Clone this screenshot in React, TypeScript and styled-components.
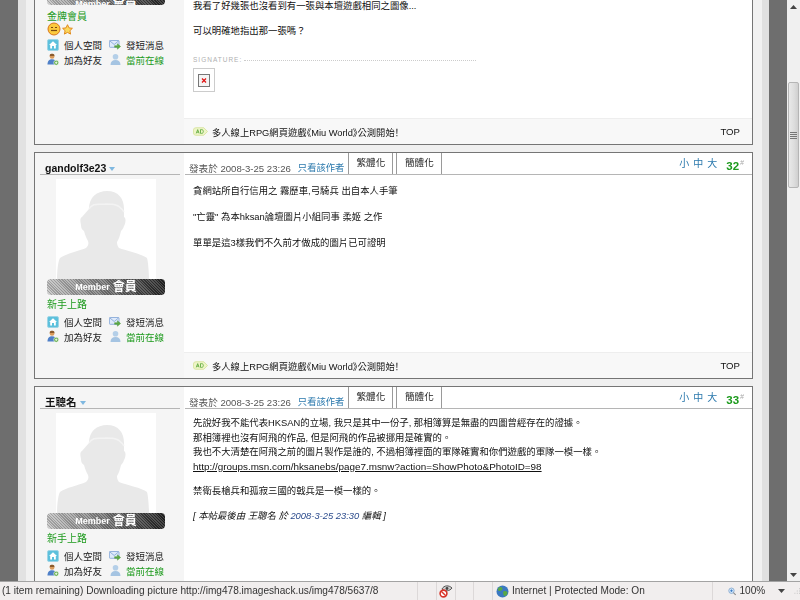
import React from "react";
import styled, { createGlobalStyle } from "styled-components";

const Global = createGlobalStyle`
  html, body { margin: 0; padding: 0; height: 100%; overflow: hidden; background: #f0f0f0; }
  #root { width: 800px; height: 600px; }
  * { box-sizing: border-box; }
`;

const FONT = `"Liberation Sans", "Noto Sans CJK TC", sans-serif`;

const Window = styled.div`
  width: 800px;
  height: 600px;
  display: flex;
  flex-direction: column;
  overflow: hidden;
  font-family: ${FONT};
  font-size: 10px;
  color: #222;
  filter: blur(0.25px);
`;
const Viewport = styled.div`
  flex: 1;
  min-height: 0;
  display: flex;
  overflow: hidden;
`;
const Gutter = styled.div<{ $w: number; $c: string }>`
  flex: 0 0 ${(p) => p.$w}px;
  width: ${(p) => p.$w}px;
  background: ${(p) => p.$c};
`;
const Forum = styled.div`
  flex: 0 0 719px;
  width: 719px;
  display: flex;
  flex-direction: column;
  gap: 7px;
`;
const PostBox = styled.article<{ $h: number; $top?: boolean }>`
  flex: 0 0 ${(p) => p.$h}px;
  height: ${(p) => p.$h}px;
  display: flex;
  border: 1px solid #757575;
  border-top: ${(p) => (p.$top ? "0" : "1px solid #757575")};
  background: #fff;
`;
const Side = styled.aside`
  flex: 0 0 149px;
  width: 149px;
  background: #f5f5f5;
  display: flex;
  flex-direction: column;
`;
const Main = styled.div`
  flex: 1;
  min-width: 0;
  display: flex;
  flex-direction: column;
  background: #fff;
`;
const AuthorHead = styled.div`
  height: 22px;
  margin: 0 4px 0 5px;
  padding: 9px 0 0 5px;
  border-bottom: 1px solid #b5b5b5;
  font-size: 10.5px;
  line-height: 12px;
  font-weight: bold;
  color: #111;
  display: flex;
  align-items: center;
  gap: 3px;
`;
const Caret = styled.span`
  width: 0;
  height: 0;
  margin-top: 2px;
  border-left: 3px solid transparent;
  border-right: 3px solid transparent;
  border-top: 4px solid #7fb8e0;
`;
const AvatarBox = styled.div`
  width: 100px;
  height: 100px;
  margin: 4px 0 0 21px;
  background: #fff;
  overflow: hidden;
`;
const Badge = styled.div<{ $clip?: boolean }>`
  width: 118px;
  height: ${(p) => (p.$clip ? 5 : 16)}px;
  margin-left: 12px;
  border-radius: ${(p) => (p.$clip ? "0 0 4px 4px" : "4px")};
  background:
    repeating-linear-gradient(45deg, rgba(255,255,255,.16) 0 1px, rgba(0,0,0,.16) 1px 2px),
    linear-gradient(90deg, #c4c4c4 0%, #8a8a8a 40%, #555 70%, #222 100%);
  color: #fff;
  font-size: 9px;
  font-weight: bold;
  text-align: center;
  line-height: ${(p) => (p.$clip ? 1 : 16)}px;
  overflow: hidden;
  display: flex;
  align-items: ${(p) => (p.$clip ? "flex-end" : "center")};
  justify-content: center;
  gap: 3px;
`;
const BadgeCjk = styled.span`
  font-size: 12px;
`;
const Rank = styled.div<{ $mt?: number }>`
  margin: ${(p) => p.$mt ?? 3}px 0 0 12px;
  height: 13px;
  line-height: 13px;
  font-size: 10px;
  color: #1c9a1c;
`;
const Stars = styled.div`
  margin: 0 0 0 12px;
  height: 12px;
  display: flex;
  align-items: center;
  gap: 1px;
`;
const LinkGrid = styled.div<{ $mt: number }>`
  margin: ${(p) => p.$mt}px 0 0 12px;
  display: grid;
  grid-template-columns: 62px 62px;
  grid-auto-rows: 15px;
`;
const SideLink = styled.div<{ $on?: boolean }>`
  display: flex;
  align-items: center;
  gap: 5px;
  font-size: 9.5px;
  white-space: nowrap;
  color: ${(p) => (p.$on ? "#1c9a1c" : "#222")};
`;
const IconSlot = styled.span`
  flex: 0 0 12px;
  width: 12px;
  height: 13px;
  display: flex;
  align-items: center;
  justify-content: center;
`;
const MetaBar = styled.div`
  height: 22px;
  margin-left: 1px;
  display: flex;
  align-items: flex-end;
  border-bottom: 1px solid #b5b5b5;
  padding-left: 4px;
  color: #555;
  font-size: 9.6px;
  line-height: 11px;
`;
const MetaText = styled.span`
  white-space: pre;
`;
const AuthorOnly = styled.span`
  color: #2a78ac;
  font-size: 9.3px;
  margin-left: 7px;
`;
const Tab = styled.div<{ $first?: boolean }>`
  height: 21px;
  width: ${(p) => (p.$first ? 45 : 46)}px;
  margin-left: ${(p) => (p.$first ? 4 : 3)}px;
  border-left: 1px solid #9a9a9a;
  border-right: 1px solid #9a9a9a;
  background: #fff;
  color: #222;
  text-align: center;
  line-height: 19px;
  font-size: 9.6px;
`;
const Tools = styled.div`
  margin-left: auto;
  align-self: flex-start;
  padding: 5px 8px 0 0;
  display: flex;
  align-items: flex-start;
  color: #2a78ac;
  font-size: 10px;
  line-height: 12px;
  gap: 4px;
`;
const FloorNum = styled.span`
  color: #1c9a1c;
  font-size: 11.5px;
  font-weight: bold;
  margin-left: 5px;
  margin-top: 2px;
`;
const FloorMark = styled.sup`
  color: #aaa;
  font-size: 7px;
  line-height: 0;
  font-style: italic;
  font-weight: normal;
  margin-left: 1px;
`;
const Body = styled.div<{ $top: number; $lh: number }>`
  padding: ${(p) => p.$top}px 8px 0 9px;
  font-size: 9.4px;
  line-height: ${(p) => p.$lh}px;
  color: #111;
`;
const Para = styled.p<{ $gap?: number }>`
  margin: 0 0 ${(p) => p.$gap ?? 13}px;
  white-space: nowrap;
`;
const PostUrl = styled.a`
  color: #111;
  font-size: 9.9px;
  text-decoration: underline;
`;
const EditNote = styled.p`
  margin: 0;
  font-style: italic;
  white-space: nowrap;
`;
const EditBlue = styled.span`
  color: #2a4a8c;
`;
const SigLine = styled.div`
  margin: 6px 0 0 9px;
  width: 283px;
  display: flex;
  align-items: center;
  gap: 2px;
  color: #b0b0b0;
  font-size: 6.5px;
  letter-spacing: 1px;
  line-height: 8px;
`;
const SigRule = styled.div`
  flex: 1;
  border-top: 1px dotted #ccc;
`;
const BrokenImg = styled.div`
  margin: 4px 0 0 9px;
  width: 22px;
  height: 24px;
  border: 1px solid #ccc;
  display: flex;
  align-items: center;
  justify-content: center;
`;
const AdBar = styled.div`
  margin-top: auto;
  flex: 0 0 26px;
  height: 26px;
  background: #f8f8f8;
  border-top: 1px solid #eee;
  padding: 0 12px 0 9px;
  display: flex;
  align-items: center;
  gap: 4px;
  font-size: 9.6px;
  color: #111;
`;
const AdCopy = styled.span`
  font-size: 9.3px;
  font-feature-settings: "palt";
  white-space: nowrap;
`;
const AdTop = styled.span`
  margin-left: auto;
  font-size: 9.6px;
  color: #111;
`;
const Scroll = styled.div`
  flex: 0 0 13px;
  width: 13px;
  background: #f0f0f0;
  display: flex;
  flex-direction: column;
  align-items: center;
`;
const ScrollBtn = styled.div<{ $end?: boolean }>`
  height: 13px;
  display: flex;
  align-items: center;
  justify-content: center;
  flex: 0 0 13px;
  margin-top: ${(p) => (p.$end ? "auto" : "0")};
`;
const Thumb = styled.div`
  margin-top: 69px;
  width: 11px;
  height: 106px;
  background: linear-gradient(90deg, #e9e9e9, #dcdcdc 60%, #cfcfcf);
  border: 1px solid #b5b5b5;
  border-radius: 2px;
  display: flex;
  align-items: center;
  justify-content: center;
`;
const Status = styled.footer`
  flex: 0 0 19px;
  height: 19px;
  display: flex;
  border-top: 1px solid #a3a3a3;
  background: #f1eeee;
  font-family: "Liberation Sans", sans-serif;
  font-size: 10.1px;
  color: #333;
  line-height: 18px;
`;
const Cell = styled.div<{ $w: number; $sep?: boolean }>`
  flex: 0 0 ${(p) => p.$w}px;
  width: ${(p) => p.$w}px;
  display: flex;
  align-items: center;
  gap: 3px;
  white-space: nowrap;
  overflow: hidden;
  border-left: ${(p) => (p.$sep ? "1px solid #dcd8d8" : "0")};
  justify-content: ${(p) => (p.$sep ? "center" : "flex-start")};
`;
const StatusText = styled(Cell)`
  padding-left: 2px;
`;
const InternetCell = styled(Cell)`
  padding-left: 3px;
  justify-content: flex-start;
`;
const ZoomCell = styled(Cell)`
  justify-content: flex-start;
  padding-left: 15px;
`;
const ZoomArrow = styled.span`
  display: flex;
  margin: 0 5px 0 10px;
`;

/* icons */
const Silhouette = () => (
  <svg width="100" height="100" viewBox="0 0 100 100">
    <path
      d="M33 30c0-12 8-18 18-18 11 0 17 7 17 18v8c2 1 2 5 0 9-1 3-2 4-3 5-1 4-2 8-4 11 0 3 1 5 2 6 8 3 23 6 28 10 1 3 2 14 2 21H1c0-7 1-18 3-21 5-4 19-7 26-10 2-2 3-4 2-7-2-3-3-7-4-10-2-1-3-3-3-6-1-4-1-7 1-8z"
      fill="#e9e9e9"
    />
    <path d="M33 30c4-7 10-4 17-5 7 0 13 0 18 8" fill="none" stroke="#f3f3f3" strokeWidth="1.5" />
  </svg>
);
const Home = () => (
  <svg width="12" height="12" viewBox="0 0 12 12">
    <rect x="0.5" y="0.5" width="11" height="11" rx="1.5" fill="#5cc0dc" stroke="#9fd5e6" />
    <path d="M6 2.2 10 6H8.8v3.6H7V7H5v2.6H3.2V6H2z" fill="#fff" />
  </svg>
);
const Mail = () => (
  <svg width="15" height="13" viewBox="0 0 15 13">
    <rect x="0.5" y="1.5" width="12" height="8.5" rx="1" fill="#dfeafa" stroke="#7da2d4" />
    <path d="M1 2l5.5 4.5L12 2" fill="none" stroke="#7da2d4" />
    <path d="M7 8h3.5V5.6L14.5 9l-4 3.4V10H7z" fill="#5dab43" stroke="#3e8a2c" strokeWidth=".5" />
  </svg>
);
const UserAdd = () => (
  <svg width="13" height="13" viewBox="0 0 13 13">
    <circle cx="5.5" cy="3.2" r="2.6" fill="#d99a5c" />
    <path d="M3 1.5c1-1.5 4-1.5 5 0v1.2H3z" fill="#8a5a2c" />
    <path d="M.5 12c0-4 2-5.8 5-5.8S10 8 10 12z" fill="#4f80c8" />
    <circle cx="10" cy="10" r="2.7" fill="#5dab43" stroke="#fff" strokeWidth=".6" />
    <path d="M10 8.6v2.8M8.6 10h2.8" stroke="#fff" strokeWidth=".9" />
  </svg>
);
const UserOn = () => (
  <svg width="11" height="13" viewBox="0 0 11 13">
    <circle cx="5.5" cy="3.8" r="2.8" fill="#b4cfe8" />
    <path d="M.5 12c0-3.4 2-5 5-5s5 1.6 5 5z" fill="#a5c4e2" />
  </svg>
);
const Smiley = () => (
  <svg width="14" height="14" viewBox="0 0 14 14">
    <circle cx="7" cy="7" r="6" fill="#fbc93d" stroke="#d9761a" />
    <path d="M4 5.5h2M8 5.5h2" stroke="#7a4a10" />
    <path d="M4 8.5h6" stroke="#7a4a10" strokeWidth="1.2" />
  </svg>
);
const Star = () => (
  <svg width="11" height="11" viewBox="0 0 11 11">
    <path
      d="M5.5.7 7 3.9l3.4.4-2.5 2.4.7 3.4-3.1-1.7-3.1 1.7.7-3.4L.6 4.3 4 3.9z"
      fill="#fbd75b"
      stroke="#e08a1c"
    />
  </svg>
);
const AdTag = () => (
  <svg width="15" height="9" viewBox="0 0 16 9">
    <path d="M3 .5h8.5L15.5 4.5 11.5 8.5H3A2.5 2.5 0 0 1 .5 6V3A2.5 2.5 0 0 1 3 .5z" fill="#eef5c8" stroke="#d8e4a0" />
    <path d="M3.5 6.5 5 2.5l1.5 4M4 5.2h2M8 2.5v4h1.2c1.4 0 1.8-1 1.8-2s-.4-2-1.8-2z" fill="none" stroke="#4ca02c" strokeWidth=".8" />
  </svg>
);
const BrokenX = () => (
  <svg width="12" height="13" viewBox="0 0 12 13">
    <rect x="0.5" y="0.5" width="11" height="12" fill="#f4f4f4" stroke="#777" />
    <path d="M4 4.5l4 4M8 4.5l-4 4" stroke="#e01010" strokeWidth="1.2" />
  </svg>
);
const Eye = () => (
  <svg width="14" height="14" viewBox="0 0 14 14">
    <path d="M3 5c2-4 7-4 10-1-2 3-7 4-10 1z" fill="#ccc" stroke="#555" />
    <circle cx="8" cy="4.5" r="1.4" fill="#444" />
    <circle cx="4.5" cy="9.5" r="3.4" fill="#fff" stroke="#d8352a" strokeWidth="1.6" />
    <path d="M2.2 7.2l4.6 4.6" stroke="#d8352a" strokeWidth="1.4" />
  </svg>
);
const Globe = () => (
  <svg width="13" height="13" viewBox="0 0 13 13">
    <circle cx="6.5" cy="6.5" r="6" fill="#3a78c0" />
    <path d="M3 2.5c2-1 3 0 3.5 1S5 6 3.5 6 1 4 3 2.5zM7.5 6.5c2-1 4 0 4 1.5S9.5 11.5 8.5 11 6.5 7 7.5 6.5z" fill="#58a845" />
  </svg>
);
const Magnifier = () => (
  <svg width="11" height="11" viewBox="0 0 11 11">
    <circle cx="4.5" cy="4.5" r="3.5" fill="#d5e8fa" stroke="#7aa0c8" />
    <path d="M4.5 2.8v3.4M2.8 4.5h3.4" stroke="#2a70c0" />
    <path d="M7 7l3 3" stroke="#8a8a8a" strokeWidth="1.5" />
  </svg>
);
const Arrow = ({ up }: { up?: boolean }) => (
  <svg width="7" height="4" viewBox="0 0 7 4">
    <path d={up ? "M3.5 0 7 4H0z" : "M0 0h7L3.5 4z"} fill="#444" />
  </svg>
);
const Grip = () => (
  <svg width="7" height="7" viewBox="0 0 7 7">
    <path d="M0 .5h7M0 2.5h7M0 4.5h7M0 6.5h7" stroke="#777" />
  </svg>
);
const ResizeGrip = () => (
  <svg width="10" height="10" viewBox="0 0 10 10">
    <path d="M8 2h1M5 5h1M8 5h1M2 8h1M5 8h1M8 8h1" stroke="#aaa" />
  </svg>
);

const Links = ({ mt }: { mt: number }) => (
  <LinkGrid $mt={mt}>
    <SideLink><IconSlot><Home /></IconSlot>個人空間</SideLink>
    <SideLink><IconSlot><Mail /></IconSlot>發短消息</SideLink>
    <SideLink><IconSlot><UserAdd /></IconSlot>加為好友</SideLink>
    <SideLink $on><IconSlot><UserOn /></IconSlot>當前在線</SideLink>
  </LinkGrid>
);

const Ad = () => (
  <AdBar>
    <AdTag />
    <AdCopy>多人線上RPG網頁遊戲《Miu World》公測開始！</AdCopy>
    <AdTop>TOP</AdTop>
  </AdBar>
);

const Head = ({ floor }: { floor: number }) => (
  <MetaBar>
    <MetaText>發表於 2008-3-25 23:26</MetaText>
    <AuthorOnly>只看該作者</AuthorOnly>
    <Tab $first>繁體化</Tab>
    <Tab>簡體化</Tab>
    <Tools>
      <span>小</span>
      <span>中</span>
      <span>大</span>
      <FloorNum>
        {floor}
        <FloorMark>#</FloorMark>
      </FloorNum>
    </Tools>
  </MetaBar>
);

const Author = ({ name }: { name: string }) => (
  <Side>
    <AuthorHead>
      {name}
      <Caret />
    </AuthorHead>
    <AvatarBox>
      <Silhouette />
    </AvatarBox>
    <Badge>
      Member <BadgeCjk>會員</BadgeCjk>
    </Badge>
    <Rank>新手上路</Rank>
    <Links mt={3} />
  </Side>
);

export default function App() {
  return (
    <>
      <Global />
      <Window>
        <Viewport>
          <Gutter $w={18} $c="#6e6e6e" />
          <Gutter $w={8} $c="#e2e2e2" />
          <Gutter $w={8} $c="#f1f1f1" />
          <Forum>
            <PostBox $h={145} $top>
              <Side>
                <Badge $clip>
                  Member <BadgeCjk>會員</BadgeCjk>
                </Badge>
                <Rank $mt={5}>金牌會員</Rank>
                <Stars>
                  <Smiley />
                  <Star />
                </Stars>
                <Links mt={2} />
              </Side>
              <Main>
                <Body $top={0} $lh={12}>
                  <Para>我看了好幾張也沒看到有一張與本壇遊戲相同之圖像...</Para>
                  <Para>可以明確地指出那一張嗎？</Para>
                </Body>
                <SigLine>
                  SIGNATURE:
                  <SigRule />
                </SigLine>
                <BrokenImg>
                  <BrokenX />
                </BrokenImg>
                <Ad />
              </Main>
            </PostBox>
            <PostBox $h={227}>
              <Author name="gandolf3e23" />
              <Main>
                <Head floor={32} />
                <Body $top={9} $lh={13}>
                  <Para>貪網站所自行信用之 霧歷車,弓騎兵 出自本人手筆</Para>
                  <Para>"亡靈" 為本hksan論壇圖片小組同事 柔姬 之作</Para>
                  <Para>單單是這3樣我們不久前才做成的圖片已可證明</Para>
                </Body>
                <Ad />
              </Main>
            </PostBox>
            <PostBox $h={227}>
              <Author name="王聰名" />
              <Main>
                <Head floor={33} />
                <Body $top={7} $lh={14.5}>
                  <Para $gap={0}>先說好我不能代表HKSAN的立場, 我只是其中一份子, 那相簿算是無盡的四圖曾經存在的證據。</Para>
                  <Para $gap={0}>那相簿裡也沒有阿飛的作品, 但是阿飛的作品被挪用是確實的。</Para>
                  <Para $gap={0}>我也不大清楚在阿飛之前的圖片製作是誰的, 不過相簿裡面的軍隊確實和你們遊戲的軍隊一模一樣。</Para>
                  <Para $gap={10}>
                    <PostUrl>http://groups.msn.com/hksanebs/page7.msnw?action=ShowPhoto&amp;PhotoID=98</PostUrl>
                  </Para>
                  <Para $gap={10}>禁衛長槍兵和孤寂三國的戟兵是一模一樣的。</Para>
                  <EditNote>
                    [ 本帖最後由 王聰名 於 <EditBlue>2008-3-25 23:30</EditBlue> 編輯 ]
                  </EditNote>
                </Body>
              </Main>
            </PostBox>
          </Forum>
          <Gutter $w={9} $c="#f1f1f1" />
          <Gutter $w={7} $c="#e0e0e0" />
          <Gutter $w={18} $c="#6e6e6e" />
          <Scroll>
            <ScrollBtn><Arrow up /></ScrollBtn>
            <Thumb><Grip /></Thumb>
            <ScrollBtn $end><Arrow /></ScrollBtn>
          </Scroll>
        </Viewport>
        <Status>
          <StatusText $w={417}>(1 item remaining) Downloading picture http://img478.imageshack.us/img478/5637/8</StatusText>
          <Cell $w={19} $sep />
          <Cell $w={19} $sep><Eye /></Cell>
          <Cell $w={18} $sep />
          <Cell $w={19} $sep />
          <InternetCell $w={220} $sep><Globe />Internet | Protected Mode: On</InternetCell>
          <ZoomCell $w={89} $sep>
            <Magnifier />100%
            <ZoomArrow><Arrow /></ZoomArrow>
            <ResizeGrip />
          </ZoomCell>
        </Status>
      </Window>
    </>
  );
}
